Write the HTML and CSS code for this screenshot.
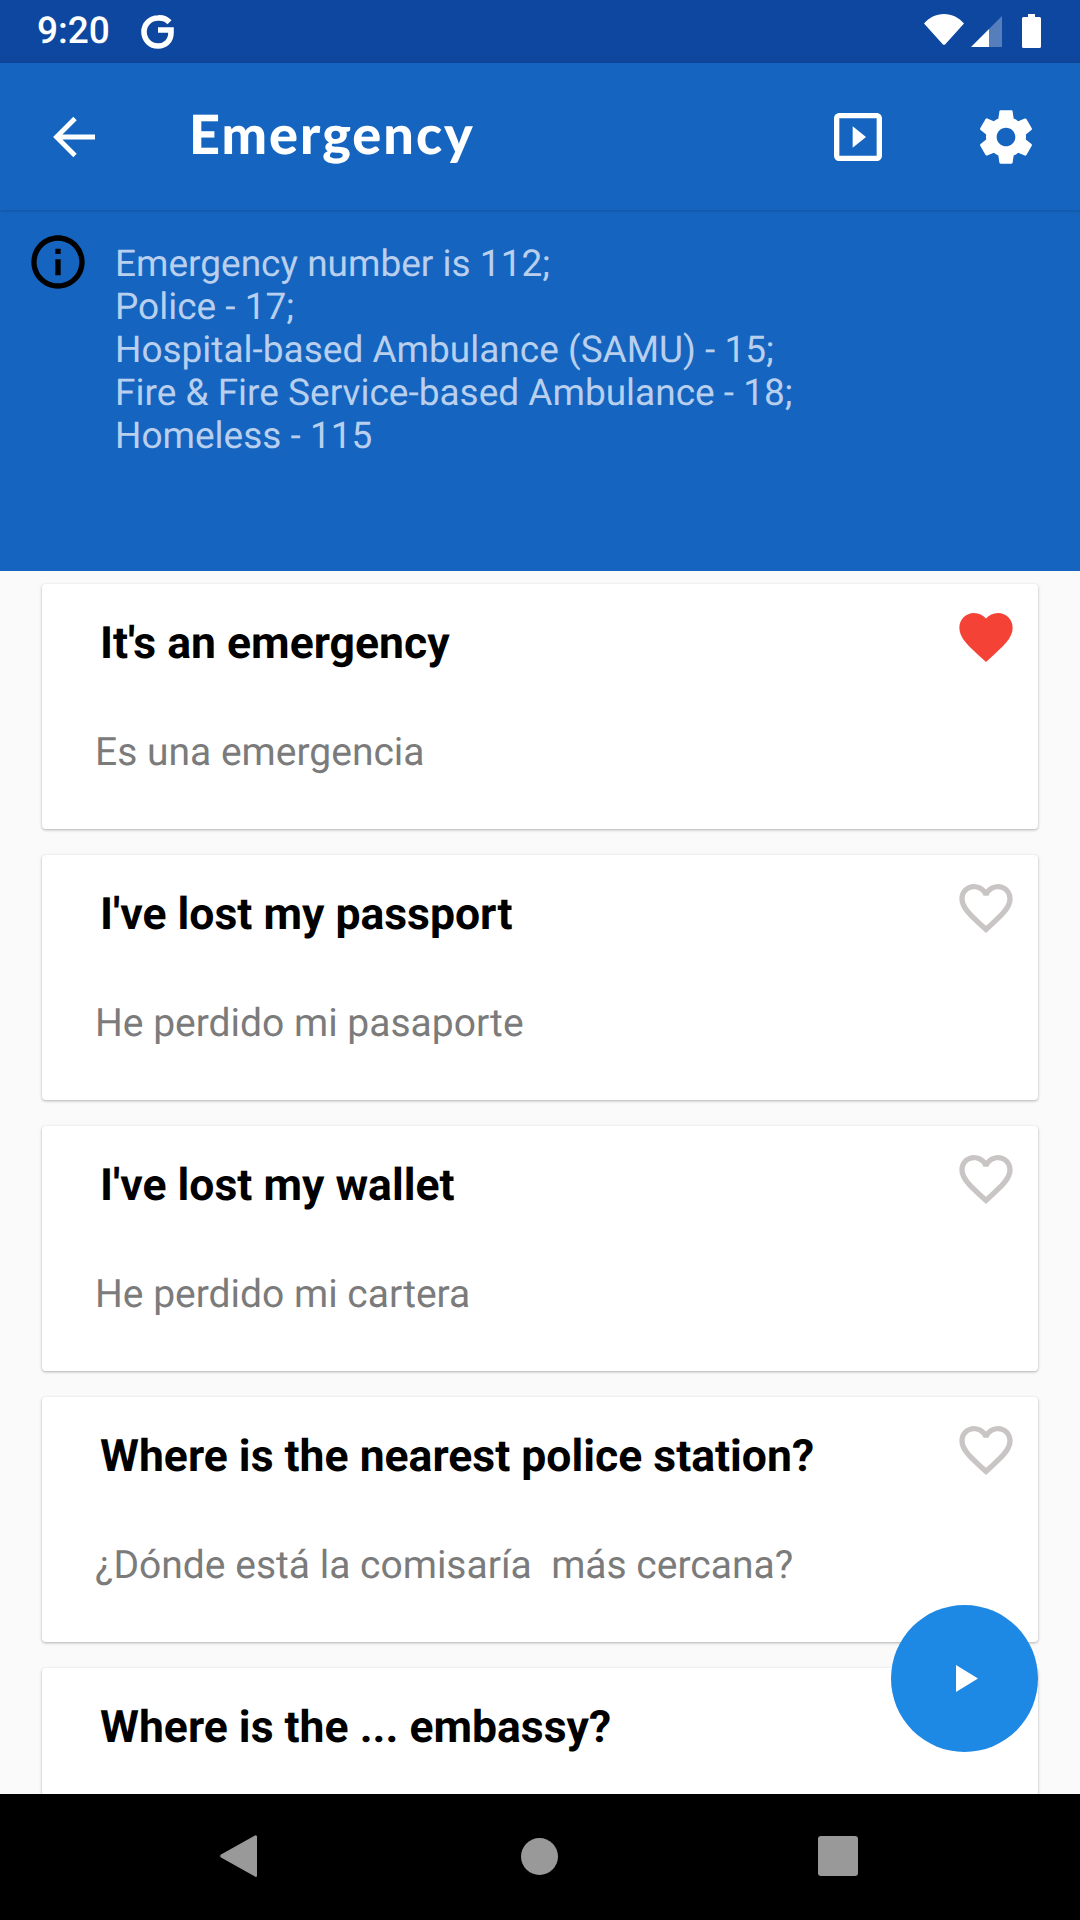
FILE: index.html
```html
<!DOCTYPE html>
<html lang="en">
<head>
<meta charset="utf-8">
<title>Emergency</title>
<link rel="stylesheet" href="styles.css">
</head>
<body>
<div class="app">
  <header class="statusbar">
    <div class="status-left">
      <span class="time">9:20</span>
      <svg class="g-logo" viewBox="0 0 33 34"><path d="M28.500 7.200A14.200 14.200 0 0 0 17 3C9.200 3 3 9.200 3 17s6.200 14 14 14c7.600 0 13-5.300 13-13.300V15H17" fill="none" stroke="#fff" stroke-width="5.600"/></svg>
    </div>
    <div class="status-right">
      <svg class="wifi" viewBox="0 0 40 31"><path d="M0 9.500C5 3.600 12 0 20 0s15 3.600 20 9.500L21.500 30a2 2 0 0 1-3 0z" fill="#fff"/></svg>
      <svg class="signal" viewBox="0 0 31 31"><path d="M31 0v31H18V13z" fill="#fff" fill-opacity=".3"/><path d="M18 13v18H0z" fill="#fff"/></svg>
      <svg class="battery" viewBox="0 0 19 34"><path d="M6 0h7v3h4.500A1.500 1.500 0 0 1 19 4.500V32.500A1.500 1.500 0 0 1 17.500 34H1.500A1.500 1.500 0 0 1 0 32.500V4.500A1.500 1.500 0 0 1 1.500 3H6z" fill="#fff"/></svg>
    </div>
  </header>

  <nav class="toolbar">
    <svg class="icon-back" viewBox="0 0 42 42"><path d="M42 21H4M22 2.500L3.500 21 22 39.500" fill="none" stroke="#fff" stroke-width="4.800"/></svg>
    <h1 class="title">Emergency</h1>
    <svg class="icon-64 icon-slides" viewBox="0 0 24 24"><path fill="#fff" d="M10 8v8l5-4-5-4zm9-5H5c-1.100 0-2 .9-2 2v14c0 1.100.9 2 2 2h14c1.100 0 2-.9 2-2V5c0-1.100-.9-2-2-2zm0 16H5V5h14v14z"/></svg>
    <svg class="icon-64 icon-gear" viewBox="0 0 24 24"><path fill="#fff" d="M19.430 12.980c.04-.32.07-.64.07-.98s-.03-.66-.07-.98l2.110-1.650c.19-.15.24-.42.12-.64l-2-3.460c-.12-.22-.39-.3-.61-.22l-2.490 1c-.52-.4-1.080-.73-1.690-.98l-.38-2.650C14.460 2.180 14.250 2 14 2h-4c-.25 0-.46.18-.49.42l-.38 2.650c-.61.25-1.170.59-1.690.98l-2.490-1c-.23-.09-.49 0-.61.22l-2 3.460c-.13.22-.07.49.12.64l2.110 1.650c-.04.32-.07.65-.07.98s.03.66.07.98l-2.110 1.650c-.19.15-.24.42-.12.64l2 3.460c.12.22.39.3.61.22l2.490-1c.52.4 1.080.73 1.690.98l.38 2.650c.03.24.24.42.49.42h4c.25 0 .46-.18.49-.42l.38-2.650c.61-.25 1.170-.59 1.690-.98l2.490 1c.23.09.49 0 .61-.22l2-3.460c.12-.22.07-.49-.12-.64l-2.110-1.650zM12 15.500c-1.930 0-3.500-1.570-3.500-3.500s1.570-3.500 3.500-3.500 3.500 1.570 3.500 3.500-1.570 3.500-3.500 3.500z"/></svg>
  </nav>

  <section class="info">
    <svg class="icon-64 icon-info" viewBox="0 0 24 24"><path fill="#000" d="M11 7h2v2h-2zm0 4h2v6h-2zm1-9C6.480 2 2 6.480 2 12s4.480 10 10 10 10-4.480 10-10S17.520 2 12 2zm0 18c-4.410 0-8-3.590-8-8s3.590-8 8-8 8 3.590 8 8-3.590 8-8 8z"/></svg>
    <p class="info-text">Emergency number is 112;<br>Police - 17;<br>Hospital-based Ambulance (SAMU) - 15;<br>Fire &amp; Fire Service-based Ambulance - 18;<br>Homeless - 115</p>
  </section>

  <main class="list">
    <article class="card">
      <h2 class="card-title">It's an emergency</h2>
      <svg class="icon-64 heart" viewBox="0 0 24 24"><path fill="#f44336" d="M12 21.350l-1.450-1.320C5.400 15.360 2 12.280 2 8.500 2 5.420 4.420 3 7.500 3c1.740 0 3.410.81 4.500 2.090C13.090 3.810 14.760 3 16.500 3 19.580 3 22 5.420 22 8.500c0 3.780-3.400 6.860-8.550 11.540L12 21.350z"/></svg>
      <p class="card-sub">Es una emergencia</p>
    </article>
    <article class="card">
      <h2 class="card-title">I've lost my passport</h2>
      <svg class="icon-64 heart" viewBox="0 0 24 24"><path fill="#c9c5c5" d="M16.500 3c-1.740 0-3.410.81-4.500 2.090C10.910 3.810 9.240 3 7.500 3 4.420 3 2 5.420 2 8.500c0 3.780 3.400 6.860 8.550 11.540L12 21.350l1.450-1.320C18.600 15.360 22 12.280 22 8.500 22 5.420 19.580 3 16.500 3zm-4.400 15.550l-.1.1-.1-.1C7.140 14.240 4 11.390 4 8.500 4 6.500 5.500 5 7.500 5c1.540 0 3.040.99 3.570 2.360h1.870C13.460 5.990 14.960 5 16.500 5c2 0 3.500 1.500 3.500 3.500 0 2.890-3.140 5.740-7.900 10.050z"/></svg>
      <p class="card-sub">He perdido mi pasaporte</p>
    </article>
    <article class="card">
      <h2 class="card-title">I've lost my wallet</h2>
      <svg class="icon-64 heart" viewBox="0 0 24 24"><path fill="#c9c5c5" d="M16.500 3c-1.740 0-3.410.81-4.500 2.090C10.910 3.810 9.240 3 7.500 3 4.420 3 2 5.420 2 8.500c0 3.780 3.400 6.860 8.550 11.540L12 21.350l1.450-1.320C18.600 15.360 22 12.280 22 8.500 22 5.420 19.580 3 16.500 3zm-4.400 15.550l-.1.1-.1-.1C7.140 14.240 4 11.390 4 8.500 4 6.500 5.500 5 7.500 5c1.540 0 3.040.99 3.570 2.360h1.870C13.460 5.990 14.960 5 16.500 5c2 0 3.500 1.500 3.500 3.500 0 2.890-3.140 5.740-7.900 10.050z"/></svg>
      <p class="card-sub">He perdido mi cartera</p>
    </article>
    <article class="card">
      <h2 class="card-title">Where is the nearest police station?</h2>
      <svg class="icon-64 heart" viewBox="0 0 24 24"><path fill="#c9c5c5" d="M16.500 3c-1.740 0-3.410.81-4.500 2.090C10.910 3.810 9.240 3 7.500 3 4.420 3 2 5.420 2 8.500c0 3.780 3.400 6.860 8.550 11.540L12 21.350l1.450-1.320C18.600 15.360 22 12.280 22 8.500 22 5.420 19.580 3 16.500 3zm-4.400 15.550l-.1.1-.1-.1C7.140 14.240 4 11.390 4 8.500 4 6.500 5.500 5 7.500 5c1.540 0 3.040.99 3.570 2.360h1.870C13.460 5.990 14.960 5 16.500 5c2 0 3.500 1.500 3.500 3.500 0 2.890-3.140 5.740-7.900 10.050z"/></svg>
      <p class="card-sub pre">¿Dónde está la comisaría  más cercana?</p>
    </article>
    <article class="card">
      <h2 class="card-title">Where is the ... embassy?</h2>
    </article>
  </main>

  <button class="fab" type="button" aria-label="Play">
    <svg class="fab-icon" viewBox="0 0 22 27"><path fill="#fff" d="M0 0l22 13.500L0 27z"/></svg>
  </button>

  <footer class="navbar">
    <svg class="nav-back" viewBox="0 0 37 42"><path fill="#999" d="M36 .5a1 1 0 0 1 1 1V41a1 1 0 0 1-1.600.7L1 22.500a2 2 0 0 1 0-3L35.400.3A1 1 0 0 1 36 .5z"/></svg>
    <span class="nav-home"></span>
    <span class="nav-recent"></span>
  </footer>
</div>
</body>
</html>
```
FILE: styles.css
```css
* { box-sizing: border-box; }
html, body { margin: 0; padding: 0; }
body { width: 1080px; height: 1920px; overflow: hidden; font-family: Roboto, sans-serif; background: #fafafa; text-rendering: geometricPrecision; }
h1, h2, p { margin: 0; }
svg { display: block; flex: none; }

.app { position: relative; display: flex; flex-direction: column; width: 1080px; height: 1920px; }

.statusbar { flex: none; height: 63px; display: flex; justify-content: space-between; align-items: flex-start; background: linear-gradient(#0e479f 0, #0e479f 55px, #0f459b 63px); }
.status-left { display: flex; align-items: center; padding: 15px 0 0 37px; }
.time { color: #fff; font-size: 37px; font-weight: 500; line-height: 34px; width: 103px; }
.g-logo { width: 33px; height: 34px; margin-left: 1px; }
.status-right { display: flex; align-items: flex-start; padding: 14px 39px 0 0; }
.wifi { width: 40px; height: 31px; margin-right: 7px; }
.signal { width: 31px; height: 31px; margin: 2px 20px 0 0; }
.battery { width: 19px; height: 34px; }

.toolbar { position: relative; z-index: 1; flex: none; height: 147px; display: flex; align-items: center; background: #1565c0; box-shadow: 0 1px 3px rgba(0, 0, 0, .18); padding-left: 53px; }
.icon-back { width: 42px; height: 42px; margin-right: 94px; }
.title { color: #fff; font-family: Lato, sans-serif; font-size: 54px; font-weight: 900; letter-spacing: 2px; line-height: 60px; width: 637px; white-space: nowrap; position: relative; top: -3px; }
.icon-64 { width: 64px; height: 64px; }
.icon-gear { margin-left: 84px; }

.info { flex: none; height: 361px; display: flex; align-items: flex-start; gap: 25px; padding: 20px 0 0 26px; background: #1565c0; }
.info-text { color: #b9cfee; font-size: 37px; line-height: 43px; padding-top: 13px; }

.list { flex: 1; min-height: 0; overflow: hidden; display: flex; flex-direction: column; gap: 26px; padding: 13px 42px 0; }
.card { position: relative; flex: none; height: 245px; background: #fff; border-radius: 4px; box-shadow: 0 1px 3px rgba(0, 0, 0, .3); padding: 31px 0 0 58px; }
.card-title { color: #000; font-size: 44.500px; font-weight: 700; line-height: 56px; white-space: nowrap; }
.card-sub { color: #7b7b7b; font-size: 39px; line-height: 48px; margin: 57px 0 0 -5px; white-space: nowrap; }
.pre { white-space: pre; }
.heart { position: absolute; top: 21px; right: 20px; }

.fab { position: absolute; left: 891px; top: 1605px; width: 147px; height: 147px; padding: 0 0 0 5px; border: 0; border-radius: 50%; background: #1e88e5; display: flex; align-items: center; justify-content: center; }
.fab-icon { width: 22px; height: 27px; }

.navbar { flex: none; height: 126px; background: #000; display: flex; align-items: center; padding: 0 0 2px 220px; }
.nav-back { width: 37px; height: 42px; margin-right: 264px; }
.nav-home { width: 37px; height: 37px; border-radius: 50%; background: #999; margin-right: 260px; }
.nav-recent { width: 40px; height: 40px; border-radius: 3px; background: #999; }
```
